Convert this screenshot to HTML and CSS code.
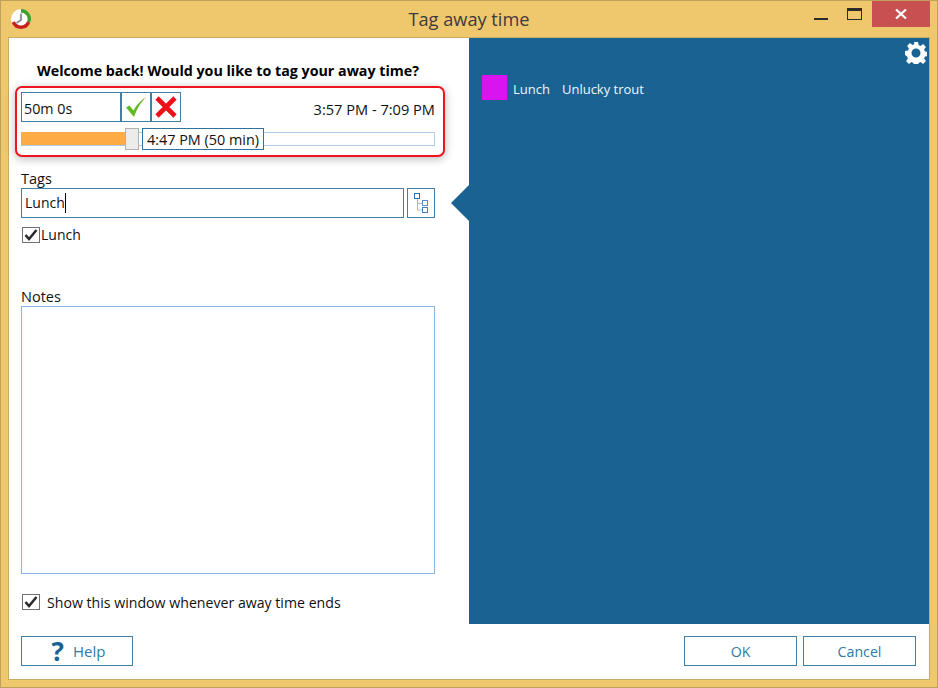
FILE: index.html
```html
<!DOCTYPE html>
<html lang="en">
<head>
<meta charset="utf-8">
<title>Tag away time</title>
<link rel="stylesheet" href="styles.css">
</head>
<body>
<div class="window">
  <header class="titlebar">
    <svg class="app-icon" width="20" height="20" viewBox="0 0 20 20">
      <circle cx="10" cy="10" r="10" fill="#fff"/>
      <path d="M10 1.700A8.300 8.300 0 0 1 17.700 13" fill="none" stroke="#3f9f2a" stroke-width="3.400"/>
      <path d="M17.700 13A8.300 8.300 0 0 1 2.300 13" fill="none" stroke="#c8201c" stroke-width="3.400"/>
      <path d="M10 4.500v6.500l-4.500 3" fill="none" stroke="#8a8a8a" stroke-width="1.800"/>
    </svg>
    <div class="title">Tag away time</div>
    <div class="controls">
      <div class="ctl"><span class="min"></span></div>
      <div class="ctl"><span class="max"></span></div>
      <div class="close">
        <svg width="12" height="10" viewBox="0 0 12 10"><path d="M1 0.500l10 9M11 0.500l-10 9" stroke="#fff" stroke-width="2.200"/></svg>
      </div>
    </div>
  </header>
  <div class="client">
    <div class="main">
      <section class="left">
        <h1 class="heading">Welcome back! Would you like to tag your away time?</h1>
        <div class="callout">
          <div class="time-row">
            <div class="duration">50m 0s</div>
            <button class="icon-btn">
              <svg width="22" height="22" viewBox="0 0 22 22"><path d="M1 11.500L4.500 9.500L8.500 14.500C11 9.500 15 5 21 1C15.500 7 12 12.500 9 21Z" fill="#62bb25"/></svg>
            </button>
            <button class="icon-btn">
              <svg width="24" height="22" viewBox="0 0 24 22"><path d="M3 2l18 18M21 2L3 20" stroke="#ee0f18" stroke-width="4.600"/></svg>
            </button>
            <div class="range">3:57 PM - 7:09 PM</div>
          </div>
          <div class="slider">
            <div class="fill"></div>
            <div class="thumb"></div>
            <div class="tip">4:47 PM (50 min)</div>
          </div>
        </div>
        <label class="field-label tags-label">Tags</label>
        <div class="tag-row">
          <div class="tag-input">Lunch<span class="caret"></span></div>
          <button class="tree-btn">
            <svg width="18" height="22" viewBox="0 0 18 22" fill="none">
              <path d="M5.500 6.500V18H10.500M5.500 11.500H10.500" stroke="#9dbcdc"/>
              <rect x="2.500" y="1.500" width="5" height="5" stroke="#2a70b8"/>
              <rect x="10.500" y="8.500" width="5" height="5" stroke="#5a8fc8"/>
              <rect x="10.500" y="15.500" width="5" height="5" stroke="#3f7fc0"/>
            </svg>
          </button>
        </div>
        <div class="check-row tag-check">
          <span class="check"><svg width="14" height="12" viewBox="0 0 14 12"><path d="M1.500 6l3.500 4L12.500 1" fill="none" stroke="#2b2b2b" stroke-width="2.600"/></svg></span>
          <span class="tag-check-text">Lunch</span>
        </div>
        <label class="field-label notes-label">Notes</label>
        <div class="notes"></div>
        <div class="check-row show-check">
          <span class="check"><svg width="14" height="12" viewBox="0 0 14 12"><path d="M1.500 6l3.500 4L12.500 1" fill="none" stroke="#2b2b2b" stroke-width="2.600"/></svg></span>
          <span class="show-text">Show this window whenever away time ends</span>
        </div>
      </section>
      <section class="panel">
        <span class="arrow"></span>
        <svg class="gear" width="22" height="22" viewBox="1 1 22 22">
          <path fill="#fff" fill-rule="evenodd" d="M10 1h4l.6 3.100 1.900.8 2.600-1.800 2.800 2.800-1.800 2.600.8 1.900 3.100.6v4l-3.100.6-.8 1.900 1.800 2.600-2.800 2.800-2.600-1.800-1.900.8-.6 3.100h-4l-.6-3.100-1.900-.8-2.600 1.800-2.800-2.800 1.800-2.600-.8-1.900L1 14v-4l3.100-.6.8-1.900-1.800-2.600 2.800-2.800 2.600 1.800 1.900-.8zM12 7.500a4.500 4.500 0 1 0 0 9 4.500 4.500 0 0 0 0-9z"/>
        </svg>
        <div class="legend">
          <span class="swatch"></span>
          <span class="legend-tag">Lunch</span>
          <span class="legend-name">Unlucky trout</span>
        </div>
      </section>
    </div>
    <footer class="footer">
      <button class="btn help">
        <span class="q">?</span>
        <span class="help-text">Help</span>
      </button>
      <div class="footer-right">
        <button class="btn">OK</button>
        <button class="btn">Cancel</button>
      </div>
    </footer>
  </div>
</div>
</body>
</html>
```
FILE: styles.css
```css
* { box-sizing: border-box; }
html, body { margin: 0; padding: 0; }
body {
  width: 938px;
  height: 688px;
  overflow: hidden;
  font-family: "Open Sans", "Noto Sans", sans-serif;
  font-size: 14px;
  color: #111;
}
.window {
  width: 938px;
  height: 688px;
  display: flex;
  flex-direction: column;
  background: #efc76c;
  border: 1px solid #bfa15e;
  padding: 0 8px 8px 8px;
}
.titlebar {
  height: 37px;
  flex: none;
  position: relative;
  display: flex;
  align-items: flex-start;
  justify-content: center;
}
.app-icon { position: absolute; left: 2px; top: 8px; }
.title {
  margin-top: 6px;
  font-size: 18.2px;
  line-height: 24px;
  color: #3c3c3c;
}
.controls {
  position: absolute;
  right: -1px;
  top: 0;
  display: flex;
}
.ctl { width: 33px; height: 26px; position: relative; }
.min { position: absolute; left: 18px; top: 17px; width: 14px; height: 2px; background: #2b2b2b; }
.max { position: absolute; left: 18px; top: 7px; width: 15px; height: 12px; border: 1px solid #2b2b2b; border-top-width: 3px; }
.close {
  width: 58px;
  height: 26px;
  margin-left: 10px;
  background: #c95050;
  display: flex;
  align-items: center;
  justify-content: center;
}
.close svg { display: block; }
.client {
  flex: 1;
  background: #fff;
  display: flex;
  flex-direction: column;
  box-shadow: 0 0 0 1px #c9ab63;
}
.main { flex: 1; display: flex; min-height: 0; }
.left {
  width: 460px;
  flex: none;
  padding: 0 34px 0 12px;
  display: flex;
  flex-direction: column;
}
.heading {
  margin: 23px 0 0 0;
  height: 25px;
  font-size: 14.27px;
  line-height: 20px;
  font-weight: 700;
  text-align: center;
  color: #000;
  white-space: nowrap;
}
.callout {
  margin: 0 -10px 0 -6px;
  height: 71px;
  border: 2px solid #f0141e;
  border-radius: 7px;
  padding: 4px 8px 0 4px;
  box-shadow: 0 2px 10px rgba(0,0,0,.28);
  background: #fff;
}
.time-row { display: flex; align-items: center; height: 30px; }
.duration {
  width: 100px;
  height: 30px;
  border: 1px solid #3f80a8;
  padding-left: 2px;
  font-size: 14.3px;
  line-height: 32px;
}
.icon-btn {
  width: 30px;
  height: 30px;
  margin: 0;
  padding: 0;
  background: #fff;
  border: 1px solid #3f80a8;
  display: flex;
  align-items: center;
  justify-content: center;
}
.icon-btn svg { display: block; }
.range { margin-left: auto; font-size: 14.6px; line-height: 30px; padding-top: 3px; }
.slider {
  position: relative;
  height: 14px;
  margin-top: 10px;
  border: 1px solid #afcbe6;
}
.fill { position: absolute; left: -1px; top: -1px; bottom: 0; width: 108px; background: #fdab45; }
.thumb {
  position: absolute;
  left: 103px;
  top: -5px;
  width: 14px;
  height: 22px;
  background: #ececec;
  border: 1px solid #b2b2b2;
}
.tip {
  position: absolute;
  left: 120px;
  top: -5px;
  width: 122px;
  height: 22px;
  background: #fff;
  border: 1px solid #2f729e;
  padding-left: 4px;
  font-size: 14.4px;
  line-height: 21px;
  white-space: nowrap;
}
.field-label { display: block; line-height: 18px; font-size: 14.5px; }
.tags-label { margin-top: 13px; height: 18px; }
.tag-row { display: flex; justify-content: space-between; height: 30px; }
.tag-input {
  width: 383px;
  border: 1px solid #3f80a8;
  padding-left: 3px;
  line-height: 28px;
  display: flex;
  align-items: center;
}
.caret { width: 1px; height: 20px; background: #000; }
.tree-btn {
  width: 28px;
  height: 30px;
  padding: 0;
  background: #fff;
  border: 1px solid #3f80a8;
  display: flex;
  align-items: center;
  justify-content: center;
}
.tree-btn svg { display: block; }
.check-row { display: flex; align-items: center; }
.check {
  width: 18px;
  height: 16px;
  border: 1px solid #707070;
  background: #fff;
  display: flex;
  align-items: center;
  justify-content: center;
  flex: none;
}
.check svg { display: block; }
.tag-check { margin-top: 8px; margin-left: 1px; height: 17px; }
.tag-check-text { margin-left: 1px; }
.notes-label { margin-top: 45px; height: 18px; }
.notes { height: 268px; border: 1px solid #8bb5dc; flex: none; }
.show-check { margin-top: 20px; margin-left: 1px; height: 16px; }
.show-text { margin-left: 7px; font-size: 14.15px; white-space: nowrap; }
.panel {
  flex: 1;
  background: #1a6292;
  position: relative;
  color: #eef8fd;
  padding: 37px 0 0 13px;
}
.arrow {
  position: absolute;
  left: -18px;
  top: 147px;
  width: 0;
  height: 0;
  border-top: 18px solid transparent;
  border-bottom: 18px solid transparent;
  border-right: 18px solid #1a6292;
}
.gear { position: absolute; right: 2px; top: 4px; display: block; }
.legend { display: flex; align-items: center; font-size: 13px; height: 25px; }
.swatch { width: 25px; height: 25px; background: #d814f0; margin-right: 6px; }
.legend-tag { margin-right: 12px; padding-top: 2px; }
.legend-name { padding-top: 2px; }
.footer {
  height: 55px;
  flex: none;
  padding: 12px 13px 0 12px;
  display: flex;
  justify-content: space-between;
  align-items: flex-start;
}
.footer-right { display: flex; gap: 6px; }
.btn {
  width: 113px;
  height: 30px;
  padding: 0;
  background: #fff;
  border: 1px solid #3f80a8;
  color: #2f7aaa;
  font-family: inherit;
  font-size: 14.2px;
  display: flex;
  align-items: center;
  justify-content: center;
}
.help { width: 112px; gap: 9px; padding-left: 3px; }
.help-text { font-size: 15px; }
.q { font-size: 26px; font-weight: 700; line-height: 28px; color: #1a6292; }
```
